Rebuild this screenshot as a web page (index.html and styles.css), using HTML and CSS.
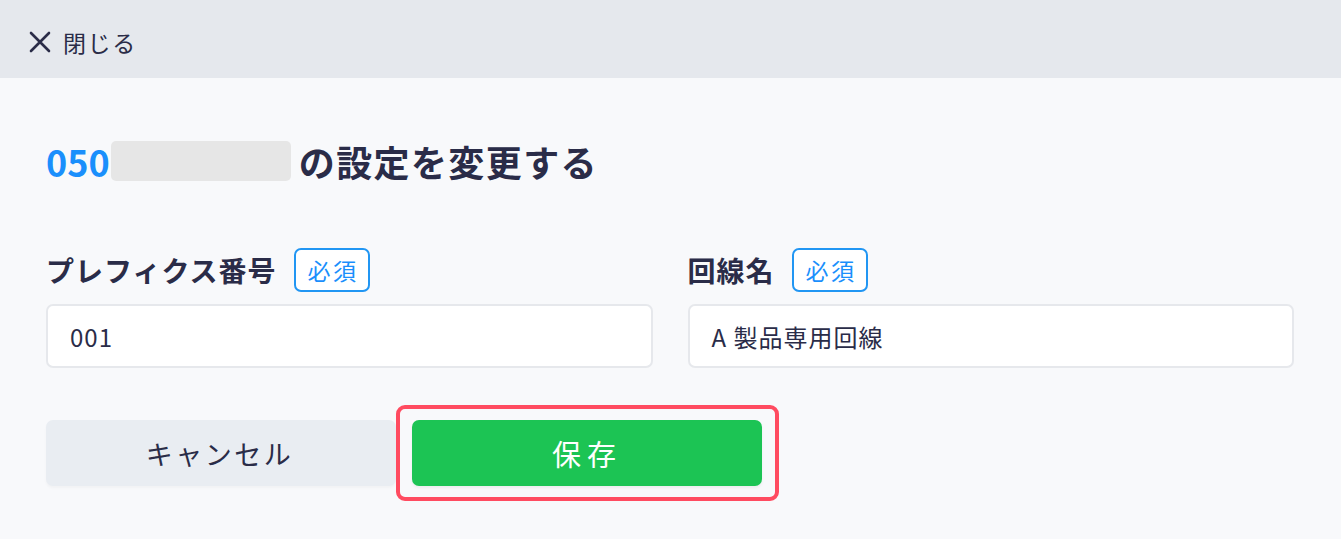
FILE: index.html
```html
<!DOCTYPE html>
<html lang="ja">
<head>
<meta charset="utf-8">
<title>設定を変更する</title>
<link rel="stylesheet" href="styles.css">
</head>
<body>
<header class="topbar">
  <button class="close-btn" type="button">
    <svg class="close-icon" width="22" height="22" viewBox="0 0 22 22" aria-hidden="true">
      <path d="M2 2 L20 20 M20 2 L2 20" stroke="currentColor" stroke-width="2.6" stroke-linecap="round" fill="none"/>
    </svg>
    <span class="close-label">閉じる</span>
  </button>
</header>
<main class="content">
  <h1 class="title">
    <span class="title-num">050</span><span class="masked"></span><span class="title-text">の設定を変更する</span>
  </h1>
  <div class="fields">
    <div class="field">
      <div class="field-head">
        <span class="field-label">プレフィクス番号</span>
        <span class="badge">必須</span>
      </div>
      <div class="input">001</div>
    </div>
    <div class="field">
      <div class="field-head">
        <span class="field-label">回線名</span>
        <span class="badge">必須</span>
      </div>
      <div class="input">A 製品専用回線</div>
    </div>
  </div>
  <div class="actions">
    <button class="btn btn-cancel" type="button">キャンセル</button>
    <div class="highlight">
      <button class="btn btn-save" type="button">保存</button>
    </div>
  </div>
</main>
</body>
</html>
```
FILE: styles.css
```css
* { box-sizing: border-box; }
html, body { margin: 0; padding: 0; }
body {
  width: 1341px;
  height: 539px;
  background: #f8f9fb;
  color: #2a2c48;
  font-family: "Noto Sans CJK JP", "Noto Sans", sans-serif;
  overflow: hidden;
}
.topbar {
  height: 78px;
  background: #e5e8ed;
  display: flex;
  align-items: center;
  padding: 6px 0 0 29px;
}
.close-btn {
  display: flex;
  align-items: center;
  gap: 12px;
  background: none;
  border: 0;
  padding: 0;
  color: #2a2c48;
  font-family: inherit;
  cursor: pointer;
}
.close-icon { display: block; }
.close-label {
  font-size: 23px;
  letter-spacing: 1.6px;
  line-height: 1;
}
.content {
  padding: 63px 47px 0 46px;
}
.title {
  margin: 0;
  display: flex;
  align-items: center;
  height: 40px;
  font-size: 36px;
  font-weight: 700;
  line-height: 40px;
  letter-spacing: 1.4px;
}
.title-num { color: #1a8ffc; letter-spacing: 0; }
.masked {
  width: 180px;
  height: 40px;
  background: #e6e6e6;
  border-radius: 5px;
  margin: 0 8px 0 1px;
}
.title-text { color: #2a2c48; }
.fields {
  margin-top: 67px;
  display: grid;
  grid-template-columns: 1fr 1fr;
  column-gap: 35px;
}
.field-head {
  display: flex;
  align-items: center;
  gap: 17px;
  height: 44px;
}
.field-label {
  font-size: 28px;
  font-weight: 700;
  letter-spacing: 1px;
  line-height: 1;
}
.badge {
  display: flex;
  align-items: center;
  justify-content: center;
  height: 44px;
  padding: 0 9px 0 12px;
  border: 2px solid #2196f3;
  border-radius: 7px;
  color: #1a8ffc;
  font-size: 23px;
  letter-spacing: 2.5px;
  line-height: 1;
  background: #fff;
}
.input {
  margin-top: 12px;
  height: 64px;
  background: #fff;
  border: 2px solid #e6e8ec;
  border-radius: 7px;
  display: flex;
  align-items: center;
  padding: 0 22px;
  font-size: 24px;
  letter-spacing: 1px;
  color: #2a2c48;
}
.actions {
  margin-top: 52px;
  display: flex;
  gap: 16px;
}
.btn {
  width: 350px;
  height: 66px;
  border: 0;
  border-radius: 7px;
  font-family: inherit;
  display: block;
}
.btn-cancel {
  background: #e9edf2;
  color: #2a2c48;
  font-size: 27px;
  letter-spacing: 2.5px;
  padding-left: 3px;
  box-shadow: 0 2px 3px rgba(0, 0, 0, 0.03);
}
.highlight {
  position: relative;
}
.highlight::after {
  content: "";
  position: absolute;
  top: -15px;
  bottom: -15px;
  left: -16px;
  right: -17px;
  border: 4px solid #ff4b60;
  border-radius: 9px;
  pointer-events: none;
}
.btn-save {
  background: #1cc454;
  color: #fff;
  font-size: 29px;
  letter-spacing: 6px;
  padding-left: 6px;
  box-shadow: 0 2px 3px rgba(0, 0, 0, 0.05);
}
```
